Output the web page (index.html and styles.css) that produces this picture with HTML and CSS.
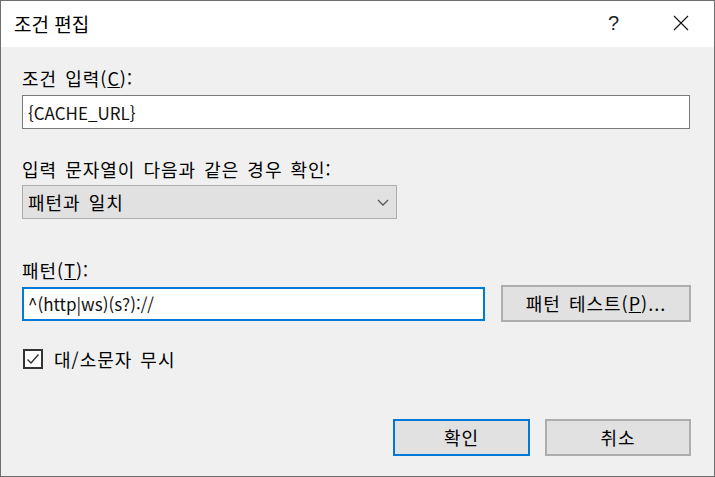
FILE: index.html
```html
<!DOCTYPE html>
<html lang="ko">
<head>
    <meta charset="UTF-8">
    <title>조건 편집</title>
    <link rel="stylesheet" href="styles.css">
</head>
<body>

    <div class="dialog">
        <!-- Titelleiste -->
        <div class="titlebar">
            <span class="title">조건 편집</span>
            <span class="help">?</span>
            <span class="close">
                <svg width="16" height="16" viewBox="0 0 16 16">
                    <path d="M1 1 L15 15 M15 1 L1 15" stroke="#111" stroke-width="1.1" fill="none"/>
                </svg>
            </span>
        </div>

        <div class="content">
            <label class="label first">조건 입력(<u>C</u>):</label>
            <div class="textbox wide">{CACHE_URL}</div>

            <label class="label second">입력 문자열이 다음과 같은 경우 확인:</label>
            <div class="combo">
                <span>패턴과 일치</span>
                <svg width="12" height="7" viewBox="0 0 12 7">
                    <path d="M1 1 L6 6 L11 1" stroke="#555" stroke-width="1.3" fill="none"/>
                </svg>
            </div>

            <label class="label third">패턴(<u>T</u>):</label>
            <div class="pattern-row">
                <div class="textbox focused">^(http|ws)(s?)://</div>
                <button class="btn test">패턴 테스트(<u>P</u>)...</button>
            </div>

            <div class="check-row">
                <span class="checkbox">
                    <svg width="14" height="14" viewBox="0 0 14 14">
                        <path d="M1.5 7.5 L5 11 L12.5 2.5" stroke="#333" stroke-width="1.4" fill="none"/>
                    </svg>
                </span>
                <span>대/소문자 무시</span>
            </div>

            <div class="actions">
                <button class="btn ok">확인</button>
                <button class="btn cancel">취소</button>
            </div>
        </div>
    </div>

</body>
</html>
```

FILE: styles.css
```css
body {
    margin: 0;
    font-family: "Noto Sans CJK KR", "Noto Sans", sans-serif;
    font-size: 18px;
    letter-spacing: 1px;
    word-spacing: 2px;
    color: #000;
}

.dialog {
    width: 715px;
    height: 477px;
    box-sizing: border-box;
    border: 1px solid #6e6e6e;
    background-color: #f0f0f0;
    display: flex;
    flex-direction: column;
}

.titlebar {
    height: 46px;
    background-color: #ffffff;
    display: flex;
    align-items: center;
    padding: 0 0 0 13px;
}

.title {
    font-size: 19px;
    letter-spacing: 0;
    word-spacing: 0;
    flex: 1;
    margin-top: -1px;
}

.help {
    font-family: "Liberation Sans", sans-serif;
    font-size: 20px;
    font-weight: 300;
    color: #222;
    width: 65px;
    margin-top: -2px;
}

.close {
    width: 41px;
    display: flex;
    margin-top: -2px;
}

.content {
    padding: 0 23px 0 21px;
    display: flex;
    flex-direction: column;
}

.label {
    display: block;
    line-height: 20px;
    height: 20px;
}

.label.first {
    margin-top: 21px;
    margin-bottom: 7px;
}

.label.second {
    margin-top: 30px;
    margin-bottom: 6px;
}

.label.third {
    margin-top: 41px;
    margin-bottom: 5px;
}

.textbox {
    height: 34px;
    box-sizing: border-box;
    background-color: #ffffff;
    border: 1px solid #7a7a7a;
    padding: 0 5px;
    display: flex;
    align-items: center;
    font-family: "Noto Sans CJK KR", sans-serif;
    font-size: 17px;
    letter-spacing: 0;
    word-spacing: 0;
    color: #111;
}

.textbox.wide {
    width: 668px;
}

.textbox.focused {
    width: 463px;
    border: 2px solid #0078d7;
    padding: 0 4px;
}

.combo {
    width: 375px;
    height: 34px;
    box-sizing: border-box;
    background-color: #e1e1e1;
    border: 1px solid #adadad;
    display: flex;
    align-items: center;
    justify-content: space-between;
    padding: 0 7px 0 5px;
}

.pattern-row {
    display: flex;
    align-items: center;
    justify-content: space-between;
}

.btn {
    font-family: "Noto Sans CJK KR", sans-serif;
    font-size: 18px;
    letter-spacing: 1px;
    word-spacing: 2px;
    line-height: 20px;
    color: #000;
    background-color: #e1e1e1;
    border: 2px solid #adadad;
    height: 37px;
    padding: 0 0 2px;
}

.btn.test {
    width: 190px;
}

.check-row {
    display: flex;
    align-items: center;
    gap: 11px;
    height: 20px;
    line-height: 20px;
    margin-top: 27px;
    margin-left: 1px;
}

.checkbox {
    width: 20px;
    height: 20px;
    box-sizing: border-box;
    border: 2px solid #333;
    background-color: #ffffff;
    display: flex;
    align-items: center;
    justify-content: center;
}

.actions {
    display: flex;
    justify-content: flex-end;
    gap: 15px;
    margin-top: 50px;
}

.btn.ok {
    width: 137px;
    border-color: #0078d7;
}

.btn.cancel {
    width: 146px;
}
```
